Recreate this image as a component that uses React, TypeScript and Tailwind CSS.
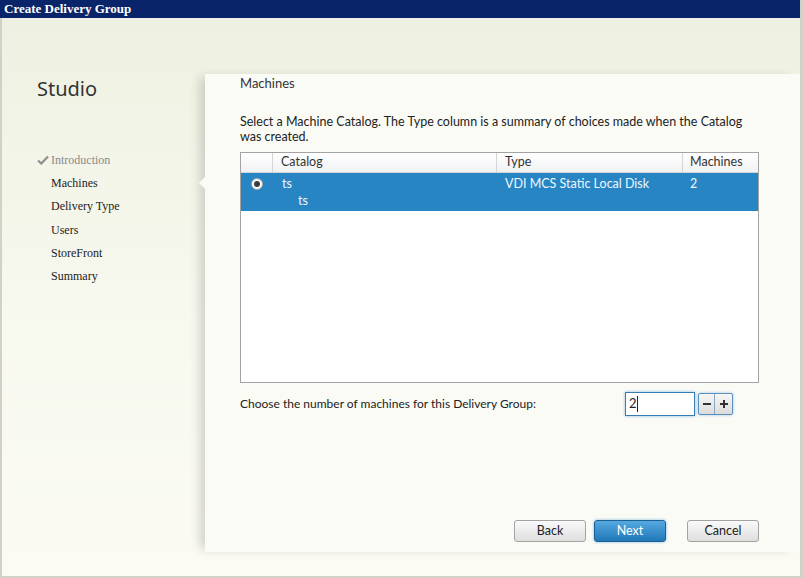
import React from "react";

const ui = { fontFamily: 'Lato, "Noto Sans", sans-serif' };
const serif = { fontFamily: '"Liberation Serif", "DejaVu Serif", serif' };

const steps = [
  { label: "Introduction", done: true },
  { label: "Machines", current: true },
  { label: "Delivery Type" },
  { label: "Users" },
  { label: "StoreFront" },
  { label: "Summary" },
];

function Sidebar() {
  return (
    <div className="w-[203px] shrink-0 flex flex-col pl-[35px] pt-[57px]">
      <div className="text-[20px] leading-[27px] text-[#333]" style={{ fontFamily: '"Noto Sans", sans-serif' }}>
        Studio
      </div>
      <ul className="mt-[46px] flex flex-col" style={serif}>
        {steps.map((s) => (
          <li
            key={s.label}
            className={`h-[23.3px] flex items-center text-[12px] ${s.done ? "text-[#8a8a8a]" : "text-[#222]"}`}
          >
            <span className="w-[14px] flex items-center">
              {s.done && (
                <svg width="12" height="10" viewBox="0 0 12 10">
                  <path d="M1 5.5 L4.3 8.5 L11 1.5" fill="none" stroke="#8e8e8e" strokeWidth="2.2" />
                </svg>
              )}
            </span>
            {s.label}
          </li>
        ))}
      </ul>
    </div>
  );
}

function Radio() {
  return (
    <span className="w-[12px] h-[12px] rounded-full bg-white border border-[#9aa6b0] flex items-center justify-center">
      <span className="w-[6px] h-[6px] rounded-full bg-[#3d3d3d]" />
    </span>
  );
}

function CatalogTable() {
  return (
    <div className="mt-[8px] h-[231px] border border-[#a3a3a3] bg-white flex flex-col text-[12.5px]" style={ui}>
      <div className="h-[20px] flex bg-gradient-to-b from-white to-[#f1f2f4] border-b border-[#d5d5d5] text-[#333]">
        <div className="w-[32px] border-r border-[#d5d5d5]" />
        <div className="w-[224px] pl-[8px] flex items-center border-r border-[#d5d5d5]">Catalog</div>
        <div className="w-[186px] pl-[8px] flex items-center border-r border-[#d5d5d5]">Type</div>
        <div className="flex-1 pl-[7px] flex items-center">Machines</div>
      </div>
      <div className="h-[38px] flex bg-[#2785c3] text-[#eef8ff]">
        <div className="w-[32px] flex justify-center pt-[5px]">
          <Radio />
        </div>
        <div className="w-[224px] pl-[9px] flex flex-col leading-[17px] pt-[2px]">
          <span>ts</span>
          <span className="pl-[16px]">ts</span>
        </div>
        <div className="w-[186px] pl-[8px] leading-[17px] pt-[2px]">VDI MCS Static Local Disk</div>
        <div className="flex-1 pl-[7px] leading-[17px] pt-[2px]">2</div>
      </div>
    </div>
  );
}

function SpinBox() {
  return (
    <div className="flex items-center">
      <div className="w-[70px] h-[24px] bg-white border border-[#3a7db3] shadow-[0_0_3px_rgba(60,140,210,0.6)] flex items-center pl-[3px] text-[13px] text-[#222]" style={ui}>
        2<span className="w-px h-[16px] bg-[#222]" />
      </div>
      <div className="ml-[3px] h-[22px] flex border border-[#5a8fbe] rounded-[2px] shadow-[0_0_3px_rgba(60,140,210,0.5)] bg-gradient-to-b from-[#f7f7f7] to-[#dcdcdc]">
        <div className="w-[16px] flex items-center justify-center border-r border-[#8aa6c0]">
          <span className="w-[8px] h-[2px] bg-[#333]" />
        </div>
        <div className="w-[17px] flex items-center justify-center relative">
          <span className="w-[8px] h-[2px] bg-[#333]" />
          <span className="absolute w-[2px] h-[8px] bg-[#333]" />
        </div>
      </div>
    </div>
  );
}

function Button({ children, primary }: { children: React.ReactNode; primary?: boolean }) {
  return (
    <div
      className={
        primary
          ? "w-[72px] h-[22px] rounded-[3px] border border-[#1c5f94] bg-gradient-to-b from-[#55a9e0] to-[#1f78b8] text-white flex items-center justify-center text-[12.5px] shadow-[0_0_3px_rgba(40,130,200,0.6)]"
          : "w-[72px] h-[22px] rounded-[3px] border border-[#a2a2a2] bg-gradient-to-b from-[#fafafa] to-[#dedede] text-[#222] flex items-center justify-center text-[12.5px]"
      }
      style={ui}
    >
      {children}
    </div>
  );
}

function Panel() {
  return (
    <div className="relative flex-1 mt-[56px] mb-[24px] bg-[#fbfbf6] shadow-[-8px_0_10px_-3px_rgba(0,0,0,0.16)] flex flex-col pl-[35px] pr-[41px] pb-[10px]">
      <span className="absolute left-[-6px] top-[103px] w-0 h-0 border-y-[6px] border-y-transparent border-r-[6px] border-r-[#fbfbf6]" />
      <div className="text-[13px] leading-[18px] text-[#333]" style={ui}>
        Machines
      </div>
      <p className="mt-[22px] text-[12.5px] leading-[15px] text-[#222]" style={ui}>
        Select a Machine Catalog. The Type column is a summary of choices made when the Catalog was created.
      </p>
      <CatalogTable />
      <div className="mt-[9px] flex items-center text-[12px] text-[#222]" style={ui}>
        <span className="w-[385px]">Choose the number of machines for this Delivery Group:</span>
        <SpinBox />
      </div>
      <div className="mt-auto flex justify-end">
        <Button>Back</Button>
        <div className="ml-[8px]">
          <Button primary>Next</Button>
        </div>
        <div className="ml-[21px]">
          <Button>Cancel</Button>
        </div>
      </div>
    </div>
  );
}

export default function App() {
  return (
    <div className="w-[803px] h-[578px] bg-[#d4d0c8] pr-[3px] flex flex-col overflow-hidden">
      <div className="h-[18px] bg-[#0a246a] flex items-center pl-[4px] text-white text-[13px] font-bold" style={serif}>
        Create Delivery Group
      </div>
      <div className="flex-1 ml-[2px] mb-[2px] flex bg-gradient-to-b from-[#eef1e1] via-[#f7f8ee] to-[#fbfbf4]">
        <Sidebar />
        <Panel />
      </div>
    </div>
  );
}
